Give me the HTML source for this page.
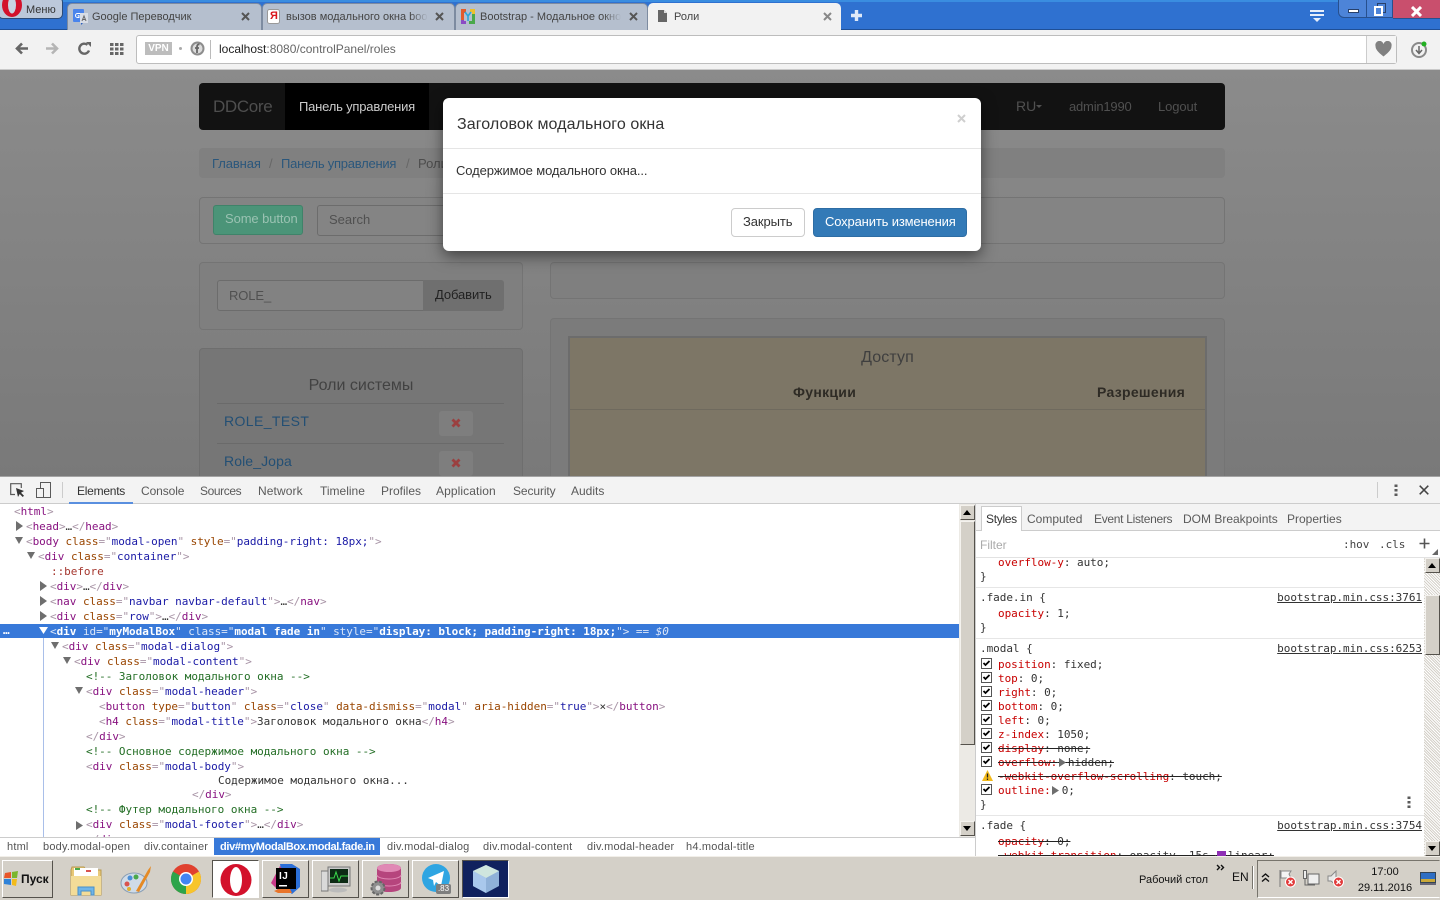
<!DOCTYPE html>
<html lang="ru"><head><meta charset="utf-8"><title>Роли</title>
<style>
html,body{margin:0;padding:0;width:1440px;height:900px;overflow:hidden;background:#fff}
body{position:relative;font-family:"Liberation Sans","Noto Sans CJK SC",sans-serif}
div,svg{position:absolute}
.s{white-space:pre;font-size:12px;line-height:16px}
.tab{top:3px;height:27px;background:#b5bfce;border:1px solid #7d8ba0;border-bottom:0;border-radius:5px 5px 0 0;box-sizing:border-box}
.tt{white-space:pre;font-size:11px;line-height:14px;color:#444;overflow:hidden}
.pn{background:#7f7f7f;border:1px solid #747474;border-radius:4px;box-sizing:border-box}
.m{white-space:pre;font:11px/15px "DejaVu Sans Mono","Liberation Mono",monospace;color:#333;letter-spacing:-.04px}
.b{color:#a894a6}.g{color:#881280}.a{color:#994500}.v{color:#1a1aa6}.c{color:#236e25}
.p{color:#c80000}.l{text-decoration:underline;color:#333}
.st{text-decoration:line-through;text-decoration-color:#222}
.dt{color:#5a5a5a;font-size:12px;line-height:16px;white-space:pre}
.bc{white-space:pre;font-size:11px;line-height:16px;color:#555;letter-spacing:.2px;top:840px}
.sb{background:#d4d0c8;border:1px solid;border-color:#f4f2ee #55524c #55524c #f4f2ee;box-sizing:border-box}
.tb{top:860px;width:47px;height:38px;background:#d4d0c8;border:1px solid;border-color:#fff #55524c #55524c #fff;box-sizing:border-box}
</style></head><body>

<!-- browser chrome -->
<div style="left:0;top:0;width:1440px;height:30px;background:#2f71d0;border-top:2px solid #3a8de0;box-sizing:border-box"></div>
<div style="left:0;top:29px;width:1440px;height:1px;background:#1f4f96"></div>

<div style="left:-2px;top:-3px;width:65px;height:22px;background:#bcc8da;border:1px solid #2c4a75;border-radius:5px;box-sizing:border-box"></div>
<svg style="left:0;top:0" width="24" height="18" viewBox="0 0 24 18"><ellipse cx="12" cy="5" rx="10" ry="12" fill="#d3112b"/><ellipse cx="12" cy="5" rx="4" ry="8.500" fill="#c8d3e2"/></svg>
<div class="s" style="left:26px;top:3px;font-size:11px;line-height:14px;color:#333">Меню</div>

<div class="tab" style="left:67px;width:195px"></div>
<svg style="left:73px;top:9px" width="16" height="16" viewBox="0 0 16 16"><rect x="0" y="0" width="11" height="13" rx="1" fill="#4a84ec"/><path d="M8 16l3-3H8z" fill="#2c5fc0"/><rect x="7" y="4" width="8" height="10" fill="#d8dde6"/><path d="M9 12l2-5 2 5M9.800 10.500h2.500" stroke="#666" stroke-width="1" fill="none"/><path d="M7 4.500H4.500a2 2 0 1 0 0 4H6V6.700H4.700" stroke="#fff" fill="none"/></svg>
<div class="tt" style="left:92px;top:10px;width:140px">Google Переводчик</div>
<svg style="left:241px;top:12px" width="9" height="9" viewBox="0 0 9 9"><path d="M1 1l7 7M8 1L1 8" stroke="#555" stroke-width="2"/></svg>

<div class="tab" style="left:262px;width:193px"></div>
<svg style="left:267px;top:9px" width="14" height="15" viewBox="0 0 14 15"><rect x=".5" y=".5" width="12" height="14" rx="2" fill="#fff" stroke="#999"/></svg>
<div style="left:270px;top:9px;font-size:11px;line-height:14px;color:#d9161c;font-weight:bold">Я</div>
<div class="tt" style="left:286px;top:10px;width:141px">вызов модального окна bootstrap</div>
<div style="left:410px;top:8px;width:18px;height:16px;background:linear-gradient(90deg,rgba(181,191,206,0),#b5bfce)"></div>
<svg style="left:435px;top:12px" width="9" height="9" viewBox="0 0 9 9"><path d="M1 1l7 7M8 1L1 8" stroke="#555" stroke-width="2"/></svg>

<div class="tab" style="left:455px;width:193px"></div>
<svg style="left:460px;top:8px" width="16" height="17" viewBox="0 0 16 17"><path d="M1 1h5v4H4v7H1z" fill="#e25b2a"/><path d="M10 1h5v5h-3V4h-2z" fill="#ecc02d"/><path d="M1 12h3v1h2v3H1z" fill="#8b4bc4"/><path d="M12 6h3v10H9v-3h3z" fill="#4aa84a"/><path d="M5 4l3 4 3-4M8 8v5" fill="none" stroke="#2aa6d8" stroke-width="1.600"/></svg>
<div class="tt" style="left:480px;top:10px;width:141px">Bootstrap - Модальное окно</div>
<div style="left:603px;top:8px;width:18px;height:16px;background:linear-gradient(90deg,rgba(181,191,206,0),#b5bfce)"></div>
<svg style="left:629px;top:12px" width="9" height="9" viewBox="0 0 9 9"><path d="M1 1l7 7M8 1L1 8" stroke="#555" stroke-width="2"/></svg>

<div style="left:648px;top:3px;width:193px;height:27px;background:#f2f2f2;border-radius:5px 5px 0 0;border:1px solid #f2f2f2;box-sizing:border-box"></div>
<svg style="left:658px;top:10px" width="9" height="12" viewBox="0 0 9 12"><path d="M0 0h6l3 3v9H0z" fill="#666"/><path d="M6 0v3h3" fill="#ddd"/></svg>
<div class="tt" style="left:674px;top:10px;width:100px">Роли</div>
<svg style="left:823px;top:12px" width="9" height="9" viewBox="0 0 9 9"><path d="M1 1l7 7M8 1L1 8" stroke="#888" stroke-width="2"/></svg>
<svg style="left:850px;top:9px" width="13" height="13" viewBox="0 0 13 13"><path d="M6.500 1v11M1 6.500h11" stroke="#dfe9f8" stroke-width="3.400"/></svg>

<svg style="left:1310px;top:10px" width="14" height="13" viewBox="0 0 14 13"><path d="M0 1h14M0 5h14" stroke="#e6eefa" stroke-width="2"/><path d="M3 8h8l-4 4z" fill="#e6eefa"/></svg>
<div style="left:1338px;top:-2px;width:55px;height:20px;background:#4d84d8;border:1px solid #27508e;border-radius:0 0 0 6px;box-sizing:border-box"></div>
<div style="left:1366px;top:0;width:1px;height:18px;background:#27508e"></div>
<div style="left:1393px;top:0;width:47px;height:19px;background:#c94f6d;border-bottom:1px solid #27508e;box-sizing:border-box"></div>
<div style="left:1348px;top:9px;width:11px;height:4px;background:#fff;border:1px solid #27406b;box-sizing:border-box"></div>
<svg style="left:1374px;top:3px" width="12" height="13" viewBox="0 0 12 13"><rect x="3.500" y=".5" width="8" height="9" fill="none" stroke="#27406b"/><rect x="1" y="4" width="7" height="8" fill="#4d84d8" stroke="#fff" stroke-width="2"/></svg>
<svg style="left:1411px;top:6px" width="11" height="11" viewBox="0 0 11 11"><path d="M1 1l9 9M10 1l-9 9" stroke="#fff" stroke-width="3"/></svg>

<div style="left:0;top:30px;width:1440px;height:40px;background:#f2f2f2;border-bottom:1px solid #c9c9c9;box-sizing:border-box"></div>
<svg style="left:14px;top:42px" width="15" height="13" viewBox="0 0 15 13"><path d="M14 6.500H4M8 1.500l-5 5 5 5" fill="none" stroke="#666" stroke-width="2.600"/></svg>
<svg style="left:45px;top:42px" width="15" height="13" viewBox="0 0 15 13"><path d="M1 6.500h10M7 1.500l5 5-5 5" fill="none" stroke="#b5b5b5" stroke-width="2.600"/></svg>
<svg style="left:78px;top:42px" width="13" height="13" viewBox="0 0 13 13"><path d="M11 8.500A5 5 0 1 1 9.500 2.800" fill="none" stroke="#666" stroke-width="2.400"/><path d="M8 0h5v5z" fill="#666"/></svg>
<svg style="left:110px;top:43px" width="14" height="12" viewBox="0 0 14 12"><path d="M0 0h3.500v3H0zM5 0h3.500v3H5zM10 0h3.500v3H10zM0 4.500h3.500v3H0zM5 4.500h3.500v3H5zM10 4.500h3.500v3H10zM0 9h3.500v3H0zM5 9h3.500v3H5zM10 9h3.500v3H10z" fill="#666"/></svg>
<div style="left:136px;top:35px;width:1261px;height:29px;background:#fff;border:1px solid #bdbdbd;border-radius:3px;box-sizing:border-box"></div>
<div style="left:145px;top:42px;width:27px;height:13px;background:#bdbdbd;color:#fff;font-size:10px;line-height:13px;font-weight:bold;text-align:center">VPN</div>
<div style="left:179px;top:47px;width:3px;height:3px;border-radius:2px;background:#aaa"></div>
<svg style="left:190px;top:41px" width="15" height="15" viewBox="0 0 15 15"><circle cx="7.500" cy="7.500" r="7" fill="#8d8d8d"/><circle cx="7.500" cy="7.500" r="5" fill="#dcdcdc"/><path d="M9.500 3.500C7.500 3 7 4.500 7 6v6M5 7h4" stroke="#666" stroke-width="1.800" fill="none"/></svg>
<div style="left:210px;top:40px;width:1px;height:19px;background:#bbb"></div>
<div class="s" style="left:219px;top:41px;color:#666"><span style="color:#222">localhost</span>:8080/controlPanel/roles</div>
<div style="left:1366px;top:36px;width:30px;height:27px;background:#f5f5f5;border-left:1px solid #ccc;box-sizing:border-box"></div>
<svg style="left:1375px;top:41px" width="17" height="16" viewBox="0 0 17 16"><path d="M8.500 15.500C3 11 .5 8.500.5 5A4 4 0 0 1 8.500 3 4 4 0 0 1 16.500 5c0 3.500-2.500 6-8 10.500z" fill="#808080"/></svg>
<svg style="left:1410px;top:39px" width="20" height="20" viewBox="0 0 20 20"><circle cx="9" cy="11" r="7" fill="none" stroke="#8a8a8a" stroke-width="2"/><path d="M9 7v7M6 11l3 3.500 3-3.500" fill="none" stroke="#666" stroke-width="1.500"/><circle cx="14" cy="5" r="2.500" fill="#22b022"/></svg>

<!-- page under backdrop -->
<div style="left:0;top:70px;width:1440px;height:406px;overflow:hidden;background:linear-gradient(180deg,#8b8b8b 0,#797979 100%)">
  <div style="left:199px;top:13px;width:1026px;height:47px;background:#121212;border-radius:4px"></div>
  <div style="left:285px;top:13px;width:144px;height:47px;background:#000"></div>
  <div style="left:213px;top:27px;font-size:17px;line-height:20px;letter-spacing:-.35px;color:#4e4e4e;white-space:pre">DDCore</div>
  <div style="left:299px;top:28px;font-size:13px;line-height:17px;letter-spacing:-.2px;color:#ccc;white-space:pre">Панель управления</div>
  <div style="left:1016px;top:28px;font-size:14px;line-height:17px;color:#505050;white-space:pre">RU</div>
  <div style="left:1036px;top:35px;width:0;height:0;border:3px solid transparent;border-top-color:#505050"></div>
  <div style="left:1069px;top:28px;font-size:13px;line-height:17px;letter-spacing:-.2px;color:#505050;white-space:pre">admin1990</div>
  <div style="left:1158px;top:28px;font-size:13px;line-height:17px;letter-spacing:-.1px;color:#505050;white-space:pre">Logout</div>

  <div style="left:199px;top:78px;width:1026px;height:30px;background:#808080;border-radius:4px"></div>
  <div style="left:212px;top:85px;font-size:13px;line-height:17px;letter-spacing:-.1px;color:#2b577c;white-space:pre">Главная</div>
  <div style="left:269px;top:85px;font-size:13px;line-height:17px;color:#666;white-space:pre">/</div>
  <div style="left:281px;top:85px;font-size:13px;line-height:17px;letter-spacing:-.25px;color:#2b577c;white-space:pre">Панель управления</div>
  <div style="left:406px;top:85px;font-size:13px;line-height:17px;color:#666;white-space:pre">/</div>
  <div style="left:418px;top:85px;font-size:13px;line-height:17px;color:#4d4d4d;white-space:pre">Роли</div>

  <div class="pn" style="left:199px;top:127px;width:1026px;height:47px;background:#848484"></div>
  <div style="left:213px;top:135px;width:90px;height:30px;background:#4b9478;border:1px solid #3f8369;border-radius:3px;box-sizing:border-box"></div>
  <div style="left:225px;top:140px;font-size:13px;line-height:17px;letter-spacing:-.1px;color:#9ac2b2;white-space:pre">Some button</div>
  <div style="left:317px;top:135px;width:140px;height:31px;background:#848484;border:1px solid #6c6c6c;border-radius:3px;box-sizing:border-box"></div>
  <div style="left:329px;top:141px;font-size:13px;line-height:17px;color:#505050;white-space:pre">Search</div>

  <div class="pn" style="left:199px;top:192px;width:324px;height:68px"></div>
  <div style="left:217px;top:210px;width:207px;height:31px;background:#828282;border:1px solid #6c6c6c;border-radius:3px 0 0 3px;box-sizing:border-box"></div>
  <div style="left:229px;top:217px;font-size:13px;line-height:17px;letter-spacing:-.1px;color:#505050;white-space:pre">ROLE_</div>
  <div style="left:423px;top:210px;width:81px;height:31px;background:#6f6f6f;border-radius:0 3px 3px 0"></div>
  <div style="left:435px;top:216px;font-size:13px;line-height:17px;letter-spacing:-.1px;color:#222;white-space:pre">Добавить</div>

  <div class="pn" style="left:199px;top:278px;width:324px;height:150px;background:#767676;border-color:#6e6e6e"></div>
  <div style="left:199px;top:307px;width:324px;text-align:center;font-size:16px;line-height:18px;color:#424242;white-space:pre">Роли системы</div>
  <div style="left:217px;top:333px;width:287px;height:1px;background:#6a6a6a"></div>
  <div style="left:224px;top:343px;font-size:14px;line-height:17px;letter-spacing:.4px;color:#234f74;white-space:pre">ROLE_TEST</div>
  <div style="left:439px;top:341px;width:34px;height:25px;background:#7e7e7e;border-radius:3px"></div>
  <svg style="left:451px;top:348px" width="10" height="10" viewBox="0 0 10 10"><path d="M1.500 1.500l7 7M8.500 1.500l-7 7" stroke="#9b4040" stroke-width="2.800"/></svg>
  <div style="left:217px;top:373px;width:287px;height:1px;background:#6a6a6a"></div>
  <div style="left:224px;top:383px;font-size:14px;line-height:17px;letter-spacing:.1px;color:#234f74;white-space:pre">Role_Jopa</div>
  <div style="left:439px;top:381px;width:34px;height:25px;background:#7e7e7e;border-radius:3px"></div>
  <svg style="left:451px;top:388px" width="10" height="10" viewBox="0 0 10 10"><path d="M1.500 1.500l7 7M8.500 1.500l-7 7" stroke="#9b4040" stroke-width="2.800"/></svg>

  <div class="pn" style="left:550px;top:192px;width:675px;height:37px"></div>
  <div class="pn" style="left:550px;top:248px;width:675px;height:170px;background:#7b7b7b"></div>
  <div style="left:568px;top:266px;width:639px;height:160px;background:#7d7666;border:2px solid #6c6c6c;box-sizing:border-box"></div>
  <div style="left:570px;top:339px;width:635px;height:1px;background:#6f6a5e"></div>
  <div style="left:568px;top:279px;width:639px;text-align:center;font-size:16px;line-height:18px;letter-spacing:.1px;color:#3f3f3f;white-space:pre">Доступ</div>
  <div style="left:793px;top:314px;font-size:14px;line-height:17px;letter-spacing:.3px;font-weight:bold;color:#2e2b25;white-space:pre">Функции</div>
  <div style="left:1097px;top:314px;font-size:14px;line-height:17px;letter-spacing:.3px;font-weight:bold;color:#2e2b25;white-space:pre">Разрешения</div>
</div>

<!-- modal -->
<div style="left:443px;top:98px;width:538px;height:153px;background:#fff;border-radius:6px;box-shadow:0 5px 15px rgba(0,0,0,.5)"></div>
<div style="left:443px;top:148px;width:538px;height:1px;background:#e5e5e5"></div>
<div style="left:443px;top:193px;width:538px;height:1px;background:#e5e5e5"></div>
<div style="left:457px;top:115px;font-size:16px;line-height:19px;letter-spacing:.08px;color:#333;white-space:pre">Заголовок модального окна</div>
<svg style="left:957px;top:114px" width="9" height="9" viewBox="0 0 9 9"><path d="M1 1l7 7M8 1L1 8" stroke="#cfcfcf" stroke-width="2"/></svg>
<div style="left:456px;top:162px;font-size:13px;line-height:17px;letter-spacing:-.1px;color:#333;white-space:pre">Содержимое модального окна...</div>
<div style="left:731px;top:208px;width:74px;height:29px;background:#fff;border:1px solid #ccc;border-radius:4px;box-sizing:border-box"></div>
<div style="left:743px;top:213px;font-size:13px;line-height:17px;letter-spacing:-.1px;color:#333;white-space:pre">Закрыть</div>
<div style="left:813px;top:208px;width:154px;height:29px;background:#337ab7;border:1px solid #2e6da4;border-radius:4px;box-sizing:border-box"></div>
<div style="left:825px;top:213px;font-size:13px;line-height:17px;letter-spacing:-.15px;color:#fff;white-space:pre">Сохранить изменения</div>

<!-- devtools -->
<div style="left:0;top:476px;width:1440px;height:380px;background:#fff"></div>
<div style="left:0;top:476px;width:1440px;height:28px;background:#f3f3f3;border-top:1px solid #a3a3a3;border-bottom:1px solid #ccc;box-sizing:border-box"></div>
<svg style="left:10px;top:483px" width="15" height="15" viewBox="0 0 15 15"><path d="M5 11.500H.7V.7h10.600V5" fill="none" stroke="#5a5a5a" stroke-width="1.200"/><path d="M6 5l2 9 1.700-3 3 3 1.300-1.300-3-3 3-1.700z" fill="#333"/></svg>
<svg style="left:36px;top:482px" width="15" height="16" viewBox="0 0 15 16"><rect x="4.500" y=".5" width="10" height="15" fill="none" stroke="#5a5a5a"/><rect x=".5" y="6.500" width="7" height="9" fill="#f3f3f3" stroke="#5a5a5a"/></svg>
<div style="left:62px;top:482px;width:1px;height:16px;background:#ccc"></div>
<div class="dt" style="left:77px;top:483px;color:#333;letter-spacing:-.25px">Elements</div>
<div style="left:69px;top:502px;width:64px;height:2px;background:#5a8fdf"></div>
<div class="dt" style="left:141px;top:483px;letter-spacing:-.1px">Console</div>
<div class="dt" style="left:200px;top:483px;letter-spacing:-.4px">Sources</div>
<div class="dt" style="left:258px;top:483px;letter-spacing:.1px">Network</div>
<div class="dt" style="left:320px;top:483px">Timeline</div>
<div class="dt" style="left:381px;top:483px">Profiles</div>
<div class="dt" style="left:436px;top:483px;letter-spacing:.1px">Application</div>
<div class="dt" style="left:513px;top:483px;letter-spacing:-.1px">Security</div>
<div class="dt" style="left:571px;top:483px">Audits</div>
<div style="left:1377px;top:482px;width:1px;height:16px;background:#ccc"></div>
<svg style="left:1394px;top:484px" width="4" height="13" viewBox="0 0 4 13"><path d="M.5.500h3v2.500h-3zM.5 5h3v2.500h-3zM.5 9.500h3V12h-3z" fill="#5a5a5a"/></svg>
<svg style="left:1419px;top:485px" width="10" height="10" viewBox="0 0 10 10"><path d="M.7.700l8.600 8.600M9.300.700L.7 9.300" stroke="#444" stroke-width="1.500"/></svg>

<div style="left:0;top:504px;width:959px;height:333px;overflow:hidden;background:#fff">
<div style="left:43px;top:134px;width:1px;height:199px;background:#a9bfe9"></div>
<div style="left:0;top:120px;width:959px;height:14px;background:#3879d9"></div>
<div class="m" style="left:14px;top:0"><span class="b">&lt;</span><span class="g">html</span><span class="b">&gt;</span></div>
<div class="m" style="left:26px;top:15px"><span class="b">&lt;</span><span class="g">head</span><span class="b">&gt;</span>…<span class="b">&lt;/</span><span class="g">head</span><span class="b">&gt;</span></div>
<div class="m" style="left:26px;top:30px"><span class="b">&lt;</span><span class="g">body</span> <span class="a">class</span><span class="b">="</span><span class="v">modal-open</span><span class="b">"</span> <span class="a">style</span><span class="b">="</span><span class="v">padding-right: 18px;</span><span class="b">"&gt;</span></div>
<div class="m" style="left:38px;top:45px"><span class="b">&lt;</span><span class="g">div</span> <span class="a">class</span><span class="b">="</span><span class="v">container</span><span class="b">"&gt;</span></div>
<div class="m" style="left:51px;top:60px;color:#a5372f">::before</div>
<div class="m" style="left:50px;top:75px"><span class="b">&lt;</span><span class="g">div</span><span class="b">&gt;</span>…<span class="b">&lt;/</span><span class="g">div</span><span class="b">&gt;</span></div>
<div class="m" style="left:50px;top:90px"><span class="b">&lt;</span><span class="g">nav</span> <span class="a">class</span><span class="b">="</span><span class="v">navbar navbar-default</span><span class="b">"&gt;</span>…<span class="b">&lt;/</span><span class="g">nav</span><span class="b">&gt;</span></div>
<div class="m" style="left:50px;top:105px"><span class="b">&lt;</span><span class="g">div</span> <span class="a">class</span><span class="b">="</span><span class="v">row</span><span class="b">"&gt;</span>…<span class="b">&lt;/</span><span class="g">div</span><span class="b">&gt;</span></div>
<div class="m" style="left:3px;top:119px;color:#fff;font-weight:bold">…</div>
<div class="m" style="left:50px;top:120px;color:#fff;font-weight:bold"><span style="font-weight:normal;color:#dbe6f8">&lt;</span>div <span style="color:#dbe6f8;font-weight:normal">id="</span>myModalBox<span style="color:#dbe6f8;font-weight:normal">" class="</span>modal fade in<span style="color:#dbe6f8;font-weight:normal">" style="</span>display: block; padding-right: 18px;<span style="color:#dbe6f8;font-weight:normal">"&gt; == </span><span style="font-style:italic;font-weight:normal;color:#dbe6f8">$0</span></div>
<div class="m" style="left:62px;top:135px"><span class="b">&lt;</span><span class="g">div</span> <span class="a">class</span><span class="b">="</span><span class="v">modal-dialog</span><span class="b">"&gt;</span></div>
<div class="m" style="left:74px;top:150px"><span class="b">&lt;</span><span class="g">div</span> <span class="a">class</span><span class="b">="</span><span class="v">modal-content</span><span class="b">"&gt;</span></div>
<div class="m c" style="left:86px;top:165px">&lt;!-- Заголовок модального окна --&gt;</div>
<div class="m" style="left:86px;top:180px"><span class="b">&lt;</span><span class="g">div</span> <span class="a">class</span><span class="b">="</span><span class="v">modal-header</span><span class="b">"&gt;</span></div>
<div class="m" style="left:99px;top:195px"><span class="b">&lt;</span><span class="g">button</span> <span class="a">type</span><span class="b">="</span><span class="v">button</span><span class="b">"</span> <span class="a">class</span><span class="b">="</span><span class="v">close</span><span class="b">"</span> <span class="a">data-dismiss</span><span class="b">="</span><span class="v">modal</span><span class="b">"</span> <span class="a">aria-hidden</span><span class="b">="</span><span class="v">true</span><span class="b">"&gt;</span>×<span class="b">&lt;/</span><span class="g">button</span><span class="b">&gt;</span></div>
<div class="m" style="left:99px;top:210px"><span class="b">&lt;</span><span class="g">h4</span> <span class="a">class</span><span class="b">="</span><span class="v">modal-title</span><span class="b">"&gt;</span>Заголовок модального окна<span class="b">&lt;/</span><span class="g">h4</span><span class="b">&gt;</span></div>
<div class="m" style="left:86px;top:225px"><span class="b">&lt;/</span><span class="g">div</span><span class="b">&gt;</span></div>
<div class="m c" style="left:86px;top:240px">&lt;!-- Основное содержимое модального окна --&gt;</div>
<div class="m" style="left:86px;top:255px"><span class="b">&lt;</span><span class="g">div</span> <span class="a">class</span><span class="b">="</span><span class="v">modal-body</span><span class="b">"&gt;</span></div>
<div class="m" style="left:218px;top:269px">Содержимое модального окна...</div>
<div class="m" style="left:192px;top:283px"><span class="b">&lt;/</span><span class="g">div</span><span class="b">&gt;</span></div>
<div class="m c" style="left:86px;top:298px">&lt;!-- Футер модального окна --&gt;</div>
<div class="m" style="left:86px;top:313px"><span class="b">&lt;</span><span class="g">div</span> <span class="a">class</span><span class="b">="</span><span class="v">modal-footer</span><span class="b">"&gt;</span>…<span class="b">&lt;/</span><span class="g">div</span><span class="b">&gt;</span></div>
<div class="m" style="left:86px;top:328px"><span class="b">&lt;/</span><span class="g">div</span><span class="b">&gt;</span></div>
<svg style="left:0;top:0" width="90" height="200" viewBox="0 0 90 200" fill="#6e6e6e"><path d="M16 17l7 5-7 5zM40 77l7 5-7 5zM40 92l7 5-7 5zM40 107l7 5-7 5z"/><path d="M15 33l8 0-4 7zM27 48l8 0-4 7zM51 138l8 0-4 7zM63 153l8 0-4 7zM75 183l8 0-4 7z"/></svg>
<svg style="left:39px;top:123px" width="9" height="8" viewBox="0 0 9 8"><path d="M0 0h9L4.500 7z" fill="#fff"/></svg>
<svg style="left:76px;top:317px" width="7" height="9" viewBox="0 0 7 9"><path d="M0 0l7 4.500L0 9z" fill="#6e6e6e"/></svg>
</div>

<!-- DOM scrollbar -->
<div style="left:959px;top:504px;width:16px;height:333px;background:#eceae5"></div>
<div class="sb" style="left:960px;top:505px;width:15px;height:15px"></div>
<svg style="left:963px;top:510px" width="8" height="5" viewBox="0 0 8 5"><path d="M4 0l4 5H0z" fill="#000"/></svg>
<div class="sb" style="left:960px;top:521px;width:15px;height:224px"></div>
<div class="sb" style="left:960px;top:821px;width:15px;height:15px"></div>
<svg style="left:963px;top:826px" width="8" height="5" viewBox="0 0 8 5"><path d="M0 0h8L4 5z" fill="#000"/></svg>

<!-- breadcrumbs -->
<div style="left:0;top:837px;width:975px;height:19px;background:#fff;border-top:1px solid #ccc;box-sizing:border-box"></div>
<div style="left:214px;top:838px;width:166px;height:17px;background:#3879d9"></div>
<div class="bc" style="left:7px;top:839px">html</div>
<div class="bc" style="left:43px;top:839px">body.modal-open</div>
<div class="bc" style="left:144px;top:839px">div.container</div>
<div class="bc" style="left:220px;top:839px;color:#fff;font-weight:bold;letter-spacing:-.35px">div#myModalBox.modal.fade.in</div>
<div class="bc" style="left:387px;top:839px">div.modal-dialog</div>
<div class="bc" style="left:483px;top:839px">div.modal-content</div>
<div class="bc" style="left:587px;top:839px">div.modal-header</div>
<div class="bc" style="left:686px;top:839px">h4.modal-title</div>

<!-- styles pane -->
<div style="left:975px;top:504px;width:465px;height:352px;background:#fff;border-left:1px solid #ccc;box-sizing:border-box"></div>
<div style="left:976px;top:504px;width:464px;height:27px;background:#f3f3f3;border-bottom:1px solid #ccc;box-sizing:border-box"></div>
<div style="left:981px;top:506px;width:41px;height:25px;background:#fff;border:1px solid #ccc;border-bottom:0;box-sizing:border-box"></div>
<div class="dt" style="left:986px;top:511px;color:#333;letter-spacing:-.3px">Styles</div>
<div class="dt" style="left:1027px;top:511px">Computed</div>
<div class="dt" style="left:1094px;top:511px;letter-spacing:-.3px">Event Listeners</div>
<div class="dt" style="left:1183px;top:511px">DOM Breakpoints</div>
<div class="dt" style="left:1287px;top:511px">Properties</div>
<div class="dt" style="left:980px;top:537px;color:#aaa">Filter</div>
<div class="m" style="left:1343px;top:537px;color:#444">:hov</div>
<div class="m" style="left:1379px;top:537px;color:#444">.cls</div>
<svg style="left:1419px;top:538px" width="11" height="11" viewBox="0 0 11 11"><path d="M5.500.500v10M.5 5.500h10" stroke="#555" stroke-width="1.600"/></svg>
<svg style="left:1432px;top:549px" width="6" height="6" viewBox="0 0 6 6"><path d="M6 0v6H0z" fill="#666"/></svg>
<div style="left:976px;top:557px;width:464px;height:1px;background:#e2e2e2"></div>

<div style="left:976px;top:558px;width:448px;height:298px;overflow:hidden">
 <div class="m" style="left:22px;top:-3px"><span class="p">overflow-y</span>: auto;</div>
 <div class="m" style="left:4px;top:11px">}</div>
 <div style="left:0;top:29px;width:448px;height:1px;background:#e6e6e6"></div>
 <div class="m" style="left:4px;top:32px">.fade.in {</div>
 <div class="m l" style="right:2px;top:32px">bootstrap.min.css:3761</div>
 <div class="m" style="left:22px;top:48px"><span class="p">opacity</span>: 1;</div>
 <div class="m" style="left:4px;top:62px">}</div>
 <div style="left:0;top:80px;width:448px;height:1px;background:#e6e6e6"></div>
 <div class="m" style="left:4px;top:83px">.modal {</div>
 <div class="m l" style="right:2px;top:83px">bootstrap.min.css:6253</div>
 <div class="m" style="left:22px;top:99px"><span class="p">position</span>: fixed;</div>
 <div class="m" style="left:22px;top:113px"><span class="p">top</span>: 0;</div>
 <div class="m" style="left:22px;top:127px"><span class="p">right</span>: 0;</div>
 <div class="m" style="left:22px;top:141px"><span class="p">bottom</span>: 0;</div>
 <div class="m" style="left:22px;top:155px"><span class="p">left</span>: 0;</div>
 <div class="m" style="left:22px;top:169px"><span class="p">z-index</span>: 1050;</div>
 <div class="m st" style="left:22px;top:183px"><span class="p">display</span>: none;</div>
 <div class="m st" style="left:22px;top:197px"><span class="p">overflow:</span><span style="letter-spacing:4px"> </span>hidden;</div>
 <svg style="left:83px;top:200px" width="7" height="9" viewBox="0 0 7 9"><path d="M0 0l7 4.500L0 9z" fill="#6e6e6e"/></svg>
 <div class="m st" style="left:22px;top:211px"><span class="p">-webkit-overflow-scrolling</span>: touch;</div>
 <div class="m" style="left:22px;top:225px"><span class="p">outline:</span><span style="letter-spacing:4.400px"> </span>0;</div>
 <svg style="left:76px;top:228px" width="7" height="9" viewBox="0 0 7 9"><path d="M0 0l7 4.500L0 9z" fill="#6e6e6e"/></svg>
 <div class="m" style="left:4px;top:239px">}</div>
 <svg style="left:431px;top:238px" width="4" height="13" viewBox="0 0 4 13"><path d="M.5.500h3v2.500h-3zM.5 5h3v2.500h-3zM.5 9.500h3V12h-3z" fill="#5a5a5a"/></svg>
 <div style="left:0;top:257px;width:448px;height:1px;background:#e6e6e6"></div>
 <div class="m" style="left:4px;top:260px">.fade {</div>
 <div class="m l" style="right:2px;top:260px">bootstrap.min.css:3754</div>
 <div class="m st" style="left:22px;top:276px"><span class="p">opacity</span>: 0;</div>
 <div class="m st" style="left:22px;top:290px"><span class="p">-webkit-transition</span>: opacity .15s <span style="letter-spacing:6px"> </span>linear;</div>
 <div style="left:241px;top:293px;width:9px;height:9px;background:#8e2fb5"></div>
</div>
<svg style="left:981px;top:658px" width="11" height="144" viewBox="0 0 11 144"><g fill="#fff" stroke="#555"><rect x=".5" y=".5" width="10" height="10"/><rect x=".5" y="14.500" width="10" height="10"/><rect x=".5" y="28.500" width="10" height="10"/><rect x=".5" y="42.500" width="10" height="10"/><rect x=".5" y="56.500" width="10" height="10"/><rect x=".5" y="70.500" width="10" height="10"/><rect x=".5" y="84.500" width="10" height="10"/><rect x=".5" y="98.500" width="10" height="10"/><rect x=".5" y="126.500" width="10" height="10"/></g><g fill="none" stroke="#000" stroke-width="1.800"><path d="M2.500 5l2 2 4-4M2.500 19l2 2 4-4M2.500 33l2 2 4-4M2.500 47l2 2 4-4M2.500 61l2 2 4-4M2.500 75l2 2 4-4M2.500 89l2 2 4-4M2.500 103l2 2 4-4M2.500 131l2 2 4-4"/></g></svg>
<svg style="left:982px;top:770px" width="11" height="11" viewBox="0 0 11 11"><path d="M5.500 0L11 11H0z" fill="#f2b91a"/><path d="M5.500 3.500v4M5.500 8.500v1.500" stroke="#222" stroke-width="1.300"/></svg>

<!-- styles scrollbar -->
<div style="left:1424px;top:558px;width:16px;height:298px;background:#e9e7e2;background-image:repeating-linear-gradient(45deg,#d4d0c8 0 1px,#fff 1px 2px)"></div>
<div class="sb" style="left:1425px;top:558px;width:15px;height:15px"></div>
<svg style="left:1428px;top:563px" width="8" height="5" viewBox="0 0 8 5"><path d="M4 0l4 5H0z" fill="#000"/></svg>
<div class="sb" style="left:1425px;top:595px;width:15px;height:60px"></div>
<div class="sb" style="left:1425px;top:841px;width:15px;height:15px"></div>
<svg style="left:1428px;top:846px" width="8" height="5" viewBox="0 0 8 5"><path d="M0 0h8L4 5z" fill="#000"/></svg>

<!-- taskbar -->
<div style="left:0;top:856px;width:1440px;height:44px;background:#d4d0c8;border-top:1px solid #f2efe9;box-sizing:border-box"></div>
<div style="left:2px;top:860px;width:51px;height:38px;background:#d4d0c8;border:1px solid;border-color:#fff #55524c #55524c #fff;box-sizing:border-box"></div>
<svg style="left:4px;top:871px" width="15" height="15" viewBox="0 0 15 15"><path d="M1 2l6-1v6H0z" fill="#e8562a"/><path d="M8 1l6-1-1 7H8z" fill="#7ab62c"/><path d="M0 8h7v6l-7-1z" fill="#2f82d8"/><path d="M8 8h5l-1 7-4-1z" fill="#f2bb1a"/></svg>
<div style="left:21px;top:871px;font-size:12px;line-height:16px;font-weight:bold;color:#111;white-space:pre">Пуск</div>

<svg style="left:70px;top:864px" width="33" height="32" viewBox="0 0 33 32"><path d="M1 6l1-3h12l2 3h15v25H1z" fill="#e8c878" stroke="#b99a50"/><path d="M4 4h24v8H4z" fill="#fff"/><path d="M5 4h5v2H5z" fill="#4aa84a"/><path d="M16 6h5v2h-5z" fill="#d9534f"/><path d="M1 12h30v19H1z" fill="#f3dc98"/><path d="M8 23h16v8h-3v-4H11v4H8z" fill="#6fb5e8" stroke="#4a8fc8"/></svg>
<svg style="left:120px;top:864px" width="32" height="32" viewBox="0 0 32 32"><ellipse cx="14" cy="19" rx="13" ry="10" fill="#cfdbe8" stroke="#8a9fb5"/><circle cx="7" cy="20" r="2.500" fill="#d9534f"/><circle cx="10" cy="14" r="2.500" fill="#4a8fd8"/><circle cx="16" cy="13" r="2.500" fill="#4aa84a"/><circle cx="9" cy="25" r="2" fill="#e0b030"/><path d="M16 27L28 6l3-4-1 6-11 20z" fill="#e58a25"/></svg>
<svg style="left:171px;top:864px" width="30" height="30" viewBox="0 0 30 30"><circle cx="15" cy="15" r="15" fill="#e0412f"/><path d="M15 15L28 7.500A15 15 0 0 1 15 30z" fill="#f7c52b"/><path d="M15 15L15 30A15 15 0 0 1 2 7.500z" fill="#2da44a"/><circle cx="15" cy="15" r="7" fill="#fff"/><circle cx="15" cy="15" r="5.500" fill="#4285f4"/></svg>
<div class="tb" style="left:212px;background:#fff;border-color:#55524c #fff #fff #55524c"></div>
<svg style="left:220px;top:864px" width="32" height="32" viewBox="0 0 32 32"><ellipse cx="16" cy="16" rx="15.500" ry="16" fill="#d3112b"/><ellipse cx="16" cy="16" rx="6" ry="13" fill="#fff"/></svg>
<div class="tb" style="left:262px"></div>
<svg style="left:270px;top:863px" width="32" height="32" viewBox="0 0 32 32"><path d="M10 1h12l8 5v18l-8 7-8-6z" fill="#2b6fd8"/><path d="M1 20L10 3l6 8-6 18z" fill="#c93a8a"/><path d="M4 28l14-6 4 8H8z" fill="#e8742a"/><rect x="6" y="5" width="20" height="21" fill="#000"/><rect x="9" y="22" width="8" height="1.500" fill="#fff"/></svg>
<div style="left:279px;top:871px;font-size:10px;line-height:12px;font-weight:bold;color:#fff;letter-spacing:.5px;white-space:pre">IJ</div>
<div class="tb" style="left:312px"></div>
<svg style="left:321px;top:865px" width="30" height="30" viewBox="0 0 30 30"><rect x="7" y="2" width="22" height="19" fill="#c9c9c9" stroke="#777"/><rect x="9" y="4" width="18" height="14" fill="#0c2a14"/><path d="M9 13h4l2-6 3 9 2-5h7" stroke="#3adb4b" fill="none"/><rect x="0" y="6" width="7" height="20" fill="#d9d9d9" stroke="#777"/><ellipse cx="17" cy="25" rx="9" ry="2.500" fill="#bbb"/></svg>
<div class="tb" style="left:362px"></div>
<svg style="left:369px;top:863px" width="33" height="33" viewBox="0 0 33 33"><path d="M8 5a12 4 0 0 1 24 0v20a12 4 0 0 1-24 0z" fill="#b6457d"/><ellipse cx="20" cy="5" rx="12" ry="4" fill="#e089b5"/><path d="M8 12a12 4 0 0 0 24 0M8 19a12 4 0 0 0 24 0" stroke="#e089b5" fill="none"/><circle cx="9" cy="25" r="6.500" fill="#8f8f8f" stroke="#666" stroke-width="2" stroke-dasharray="3 1.500"/><circle cx="9" cy="25" r="2.500" fill="#ddd"/></svg>
<div class="tb" style="left:412px"></div>
<svg style="left:421px;top:864px" width="30" height="30" viewBox="0 0 30 30"><circle cx="15" cy="14" r="14" fill="#2fa5e2"/><path d="M7 14l16-7-3 15-5-4-2 4-1-6z" fill="#fff"/></svg>
<div style="left:436px;top:884px;width:15px;height:10px;border-radius:2px;background:#7e7e7e;color:#fff;font-size:8px;line-height:10px;text-align:center">.83</div>
<div class="tb" style="left:462px;background:#10215e;border-color:#55524c #fff #fff #55524c"></div>
<svg style="left:471px;top:864px" width="30" height="30" viewBox="0 0 30 30"><path d="M15 1l13 6v15l-13 7-13-7V7z" fill="#8fb1d8"/><path d="M15 1l13 6-13 7L2 7z" fill="#cfe6de"/><path d="M15 14v15L2 22V7z" fill="#a9c8ec"/></svg>

<div style="left:1139px;top:872px;font-size:11px;line-height:16px;color:#111;white-space:pre">Рабочий стол</div>
<svg style="left:1216px;top:864px" width="9" height="7" viewBox="0 0 9 7"><path d="M1 1l2.500 2.500L1 6M5 1l2.500 2.500L5 6" fill="none" stroke="#111" stroke-width="1.400"/></svg>
<div style="left:1232px;top:870px;font-size:12px;line-height:14px;color:#111;white-space:pre">EN</div>
<div style="left:1252px;top:866px;width:1px;height:23px;background:#77746c;border-right:1px solid #fff"></div>
<div style="left:1257px;top:860px;width:183px;height:38px;border:1px solid;border-color:#77746c #d4d0c8 #fff #77746c;box-sizing:border-box"></div>
<svg style="left:1261px;top:872px" width="9" height="11" viewBox="0 0 9 11"><path d="M1 5l3.500-3L8 5M1 9.500l3.500-3 3.500 3" fill="none" stroke="#111" stroke-width="1.400"/></svg>
<svg style="left:1279px;top:870px" width="17" height="18" viewBox="0 0 17 18"><path d="M1 0v17" stroke="#777"/><path d="M2 1h10l-2 3 2 4H2z" fill="#f4f4f4" stroke="#888"/><circle cx="11.500" cy="12" r="5" fill="#e23b3b" stroke="#fff"/><path d="M9.500 10l4 4M13.500 10l-4 4" stroke="#fff" stroke-width="1.400"/></svg>
<svg style="left:1303px;top:870px" width="17" height="18" viewBox="0 0 17 18"><rect x="5" y="4" width="11" height="10" fill="#efefef" stroke="#666"/><rect x="0.500" y="0.500" width="3" height="8" fill="#eee" stroke="#666"/><path d="M2 9v6h10" stroke="#666" fill="none"/></svg>
<svg style="left:1327px;top:870px" width="17" height="18" viewBox="0 0 17 18"><path d="M1 6h3l5-5v14l-5-4H1z" fill="#e9e9e9" stroke="#888"/><circle cx="11.500" cy="12" r="5" fill="#e23b3b" stroke="#fff"/><path d="M9.500 10l4 4M13.500 10l-4 4" stroke="#fff" stroke-width="1.400"/></svg>
<div style="left:1345px;top:865px;width:80px;text-align:center;font-size:11px;line-height:14px;color:#111;white-space:pre">17:00</div>
<div style="left:1345px;top:881px;width:80px;text-align:center;font-size:11px;line-height:14px;color:#111;white-space:pre">29.11.2016</div>
<svg style="left:1420px;top:872px" width="16" height="14" viewBox="0 0 16 14"><rect x=".5" y=".5" width="15" height="10" fill="#2f6fc4" stroke="#345"/><path d="M1 7h14v3H1z" fill="#c9a83a"/><rect x="0" y="11" width="16" height="2" fill="#667"/></svg>
</body></html>
